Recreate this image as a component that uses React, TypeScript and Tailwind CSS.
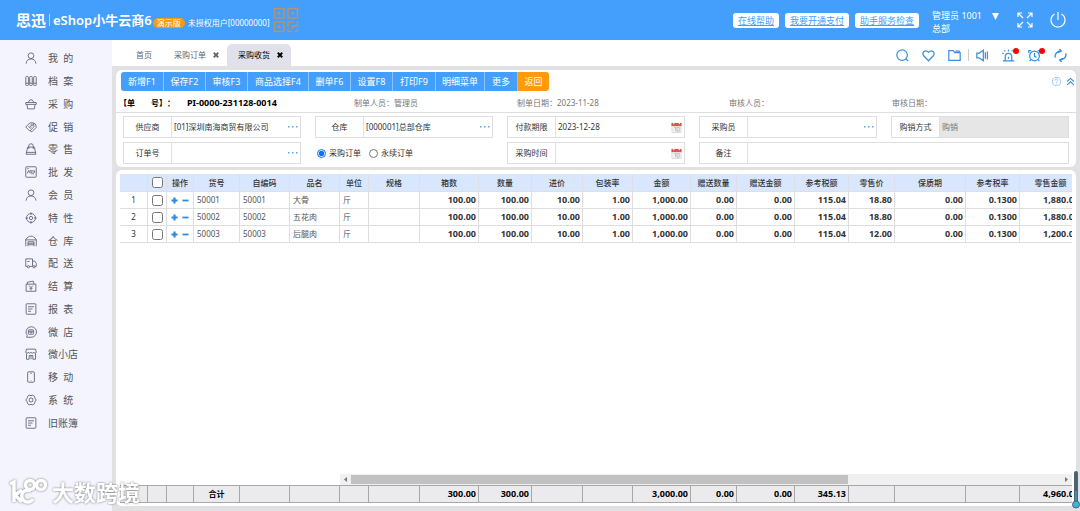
import React, { useState } from "react";

const Svg = ({ children, className = "", sw = 1 }: { children: React.ReactNode; className?: string; sw?: number }) => (
  <svg viewBox="0 0 16 16" fill="none" stroke="currentColor" strokeWidth={sw} className={className} aria-hidden="true">
    {children}
  </svg>
);

const person = (
  <>
    <circle cx="8" cy="5" r="3.8" />
    <path d="M1.500 15.500c.3-4 2.600-6.200 6.500-6.200s6.200 2.200 6.500 6.200" />
  </>
);

const sheet = (
  <>
    <rect x="1.500" y="1" width="13" height="14" rx="1" />
    <path d="M4 5h8M4 8h6M4 11h4" />
  </>
);

const menu = [
  { label: "我  的", icon: person },
  {
    label: "档  案",
    icon: (
      <>
        <rect x="1" y="2" width="3.500" height="12" rx="1" />
        <rect x="6.200" y="2" width="3.500" height="12" rx="1" />
        <rect x="11.500" y="2" width="3.500" height="12" rx="1" />
        <path d="M1 11h3.500M6.200 11h3.500M11.500 11H15" />
      </>
    ),
  },
  {
    label: "采  购",
    icon: <path d="M1 6h14v2.500H1zM2.500 8.500l1 6h9l1-6M4 6l2.500-3.500h3L12 6" />,
  },
  {
    label: "促  销",
    icon: (
      <>
        <path d="M1 8 6.500 2.500h4.500l1 5-5.500 6zM11.500 3l2.500 1 1 4.500-6 6-2-1" />
        <circle cx="9" cy="5.500" r="1" />
        <path d="m4.500 7.500 3 2.500M6 6.500l2.500 2" />
      </>
    ),
  },
  {
    label: "零  售",
    icon: <path d="M3.500 5.500h9l2 9.500h-13zM1.500 12.500h13M5 8V4a3 3 0 0 1 6 0v4" />,
  },
  {
    label: "批  发",
    icon: (
      <>
        <rect x="1" y="1" width="14" height="14" rx="1" />
        <path d="M3 10l2-4 2 4M6.500 6h1l1 3.500h3.500l1-3H8M9 11.500h.5M11.500 11.500h.5M3 3.500h2" />
      </>
    ),
  },
  { label: "会  员", icon: person },
  {
    label: "特  性",
    icon: (
      <>
        <circle cx="8" cy="8" r="6" />
        <circle cx="8" cy="8" r="2.200" />
        <path d="M8 .500v3.500M8 12v3.500M.500 8H4M12 8h3.500" />
      </>
    ),
  },
  {
    label: "仓  库",
    icon: <path d="M1 15V6c2-3 4.500-4.500 7-4.500S13 3 15 6v9M1 6.500h14M4 15V9h8v6M4 11h8M4 13h8" />,
  },
  {
    label: "配  送",
    icon: (
      <>
        <path d="M3 12.500H1v-10h9v10H6M10 5.500h3l2 3v4h-1.500M3 6h3" />
        <circle cx="4.500" cy="13" r="1.500" />
        <circle cx="12" cy="13" r="1.500" />
      </>
    ),
  },
  {
    label: "结  算",
    icon: <path d="M1.500 5.500h13v9.500h-13zM3 5.500V3l8-1.500 1 4M5.500 7.500 8 10l2.500-2.500M8 10v4M6 11h4" />,
  },
  { label: "报  表", icon: sheet },
  {
    label: "微  店",
    icon: (
      <>
        <path d="M2 15l1-2.500A7 7 0 1 1 8 15z" />
        <rect x="4.500" y="5" width="7" height="6" rx="1" />
        <path d="M4.500 7h7M6 9h4" strokeWidth="1.500" />
      </>
    ),
  },
  {
    label: "微小店",
    icon: <path d="M2 1.500h12l1 4c0 2-3 2-3.500 0-.500 2-3 2-3.500 0-.500 2-3 2-3.500 0C4 7.500 1 7.500 1 5.500zM2 7.500V15h3.500v-5h5v5H14V7.500M8 10v5" />,
  },
  {
    label: "移  动",
    icon: (
      <>
        <rect x="3.500" y="1" width="9" height="14" rx="1.500" />
        <path d="M7 3h2M7.500 13h1" />
      </>
    ),
  },
  {
    label: "系  统",
    icon: (
      <>
        <path d="m5.500 1.500 2.500.700 2.500-.700 2 1.500.700 2.500L15 8l-1.800 2.500-.700 2.500-2 1.500-2.500-.700-2.500.700-2-1.500-.700-2.500L1 8l1.800-2.500L3.500 3z" />
        <circle cx="8" cy="8" r="2.700" />
      </>
    ),
  },
  { label: "旧账簿", icon: sheet },
];

const actions = [
  { label: "新增F1", width: "w-[43px]" },
  { label: "保存F2", width: "w-[42px]" },
  { label: "审核F3", width: "w-[42px]" },
  { label: "商品选择F4", width: "w-[61px]" },
  { label: "删单F6", width: "w-[42px]" },
  { label: "设置F8", width: "w-[42px]" },
  { label: "打印F9", width: "w-[43px]" },
  { label: "明细菜单", width: "w-[49px]" },
  { label: "更多", width: "w-[33px]" },
];

const columns = [
  { title: "货号", w: 46, total: "合计" },
  { title: "自编码", w: 50, total: "" },
  { title: "品名", w: 50, total: "" },
  { title: "单位", w: 29, total: "" },
  { title: "规格", w: 51, total: "" },
  { title: "箱数", w: 59, total: "300.00" },
  { title: "数量", w: 53, total: "300.00" },
  { title: "进价", w: 51, total: "" },
  { title: "包装率", w: 50, total: "" },
  { title: "金额", w: 58, total: "3,000.00" },
  { title: "赠送数量", w: 46, total: "0.00" },
  { title: "赠送金额", w: 58, total: "0.00" },
  { title: "参考税额", w: 54, total: "345.13" },
  { title: "零售价", w: 46, total: "" },
  { title: "保质期", w: 71, total: "" },
  { title: "参考税率", w: 54, total: "" },
  { title: "零售金额", w: 62, total: "4,960.00" },
];

const rows = [
  ["50001", "50001", "大骨", "斤", "", "100.00", "100.00", "10.00", "1.00", "1,000.00", "0.00", "0.00", "115.04", "18.80", "0.00", "0.1300", "1,880.00"],
  ["50002", "50002", "五花肉", "斤", "", "100.00", "100.00", "10.00", "1.00", "1,000.00", "0.00", "0.00", "115.04", "18.80", "0.00", "0.1300", "1,880.00"],
  ["50003", "50003", "后腿肉", "斤", "", "100.00", "100.00", "10.00", "1.00", "1,000.00", "0.00", "0.00", "115.04", "12.00", "0.00", "0.1300", "1,200.00"],
];

const Cols = () => (
  <colgroup>
    {[28, 19, 27, ...columns.map((c) => c.w)].map((w, i) => (
      <col key={i} style={{ width: w }} />
    ))}
  </colgroup>
);

const Calendar = () => (
  <svg viewBox="0 0 12 12" className="h-[11px] w-[11px]" aria-hidden="true">
    <rect x="1" y="3" width="10" height="8.500" fill="#f1f1f1" stroke="#c9c9c9" strokeWidth=".6" />
    <path d="M.500 1h11v3.500H.500z" fill="#d9534f" />
    <path d="M3 0v2.500M9 0v2.500" stroke="#fff" strokeWidth="1.200" />
    <path d="M3.500 6h2M6.500 6h2.500M5 6v4M6.500 6v4h2.500V6" stroke="#aaa" strokeWidth=".7" fill="none" />
  </svg>
);

type FieldProps = {
  id: string;
  label: string;
  value?: string;
  kind?: "pick" | "date" | "plain";
  disabled?: boolean;
  className?: string;
};

const Field = ({ id, label, value = "", kind = "plain", disabled, className = "" }: FieldProps) => (
  <div className={`flex h-[22px] border border-[#dedede] ${className}`}>
    <label htmlFor={id} className="flex w-12 shrink-0 items-center justify-center border-r border-[#e2e2e2]">
      {label}
    </label>
    <input
      id={id}
      defaultValue={value}
      disabled={disabled}
      className="min-w-0 flex-1 px-[2px] outline-none disabled:bg-[#e6e6e6] disabled:text-[#777]"
    />
    {kind === "pick" && (
      <button aria-label={`选择${label}`} className="flex w-[14px] items-center justify-center text-[#5aa9e6]">
        <svg viewBox="0 0 10 2" className="h-[2px] w-[10px]" fill="currentColor">
          <path d="M0 0h1.500v1.500H0zM4 0h1.500v1.500H4zM8 0h1.500v1.500H8z" />
        </svg>
      </button>
    )}
    {kind === "date" && (
      <button aria-label={`选择${label}`} className="flex w-4 items-center justify-center">
        <Calendar />
      </button>
    )}
  </div>
);

const Close = () => (
  <svg viewBox="0 0 8 8" className="h-[6px] w-[6px]" stroke="currentColor" strokeWidth="2.400" aria-hidden="true">
    <path d="m1 1 6 6M7 1 1 7" />
  </svg>
);

const QrMark = () => (
  <svg viewBox="0 0 26 26" className="ml-[3px] h-[26px] w-[26px]" fill="none" stroke="#b5946f" strokeWidth="1.500" aria-hidden="true">
    <path d="M1.500 1.500h9.500v9.500H1.500zM15 1.500h9.500v9.500H15zM1.500 15h9.500v9.500H1.500z" />
    <path d="M5 5h2.500v2.500H5zM18.500 5H21v2.500h-2.500zM5 18.500h2.500V21H5z" fill="#b5946f" stroke="none" />
    <path d="M15 20v-5h6M24.500 14v5h-5v3M15 22v2.500h4M22 24.500h2.500V22" />
  </svg>
);

const Header = () => (
  <header className="flex h-10 shrink-0 items-center bg-[#449efc] pr-[14px] pl-4 text-white">
    <div className="text-[15px] leading-5 font-bold">思迅</div>
    <div className="mx-[3px] h-3 w-px bg-white/60" />
    <h1 className="text-[13px] leading-5 font-semibold whitespace-nowrap">eShop小牛云商6</h1>
    <span className="mt-[6px] ml-px rounded-full bg-[#f59a13] px-1 text-[8px] leading-[10px]">演示版</span>
    <span className="mt-[6px] ml-[3px] text-[8px] leading-[10px] whitespace-nowrap">未授权用户[00000000]</span>
    <QrMark />
    <nav className="ml-auto flex gap-[6px]">
      {["在线帮助", "我要开通支付", "助手服务检查"].map((t) => (
        <a key={t} href="#" className="rounded-[3px] bg-white px-[5px] text-[9px] leading-[15px] whitespace-nowrap text-[#449efc] underline">
          {t}
        </a>
      ))}
    </nav>
    <div className="mt-1 ml-[13px] text-[9px] leading-[13px] whitespace-nowrap">
      <p>管理员 1001</p>
      <p>总部</p>
    </div>
    <button aria-label="切换用户" className="mb-2 ml-[10px]">
      <svg viewBox="0 0 8 8" className="h-[7px] w-[7px]" fill="currentColor">
        <path d="M0 0h8L4 8z" />
      </svg>
    </button>
    <button aria-label="全屏" className="ml-[18px]">
      <Svg className="h-4 w-4" sw={1.2}>
        <path d="M1 5V1h4M1 1l5 5M11 1h4v4M15 1l-5 5M1 11v4h4M1 15l5-5M15 11v4h-4M15 15l-5-5" />
      </Svg>
    </button>
    <button aria-label="退出" className="ml-[17px]">
      <Svg className="h-4 w-4" sw={1.2}>
        <path d="M8 0v8M4.500 2A7 7 0 1 0 11.500 2" />
      </Svg>
    </button>
  </header>
);

const TabBar = () => (
  <div className="flex h-[26px] shrink-0 items-end bg-white pr-[13px] pl-6 text-[8px] text-[#666]">
    <button className="h-[22px]">首页</button>
    <button className="ml-[22px] flex h-[22px] items-center gap-[7px]">
      采购订单 <Close />
    </button>
    <button className="ml-2 flex h-[22px] items-center gap-[7px] rounded-t-[5px] bg-[#e0e1ea] pr-2 pl-[11px] text-black">
      采购收货 <Close />
    </button>
    <div className="ml-auto flex h-[22px] items-center gap-[13px] text-[#3a8fdc]">
      <button aria-label="搜索">
        <Svg className="h-[13px] w-[13px]" sw={1.5}>
          <circle cx="7.500" cy="7.500" r="6.500" />
          <path d="m12 12 3 3" />
        </Svg>
      </button>
      <button aria-label="收藏">
        <Svg className="h-[13px] w-[13px]" sw={1.5}>
          <path d="M8 14.500 1.800 8C-.500 4.500 4 0 8 4c4-4 8.500.500 6.200 4z" />
        </Svg>
      </button>
      <button aria-label="文件夹">
        <Svg className="h-[13px] w-[13px]" sw={1.5}>
          <path d="M1 2h5.500l2 2.500H15V14H1zM9 2.500h4.500l1 2" />
        </Svg>
      </button>
      <div className="-mx-[6px] h-3 w-px bg-[#ccc]" />
      <button aria-label="公告">
        <Svg className="h-[13px] w-[13px]" sw={1.5}>
          <path d="M1 5h3l5-3.500v13L4 11H1zM11.500 4v8M14 3v10" />
        </Svg>
      </button>
      <button aria-label="预警" className="relative">
        <Svg className="h-[13px] w-[13px]" sw={1.5}>
          <path d="M4 14V9.500a4 4 0 0 1 8 0V14M1 14.500h14M8 9.500V12M8 3V1M4 3 3 1.500M12 3l1-1.500M2 6 .500 5" />
        </Svg>
        <span className="absolute -top-px -right-1 h-[6px] w-[6px] rounded-full bg-[#f00]" />
      </button>
      <button aria-label="提醒" className="relative">
        <Svg className="h-[13px] w-[13px]" sw={1.5}>
          <circle cx="8" cy="8.500" r="6" />
          <path d="M8 5v4l2.500 1.500M1 5V2h3M15 5V2h-3M3.500 13 2 15M12.500 13l1.500 2" />
        </Svg>
        <span className="absolute -top-px -right-1 h-[6px] w-[6px] rounded-full bg-[#f00]" />
      </button>
      <button aria-label="刷新">
        <Svg className="h-[13px] w-[13px]" sw={1.7}>
          <path d="M1.500 10.500C.500 6 4 2.500 9 2.500M5 4.500l4-2L6.500 0M14.500 5.500c1 4.500-2.500 8-7.500 8M11 11.500l-4 2L9.500 16" />
        </Svg>
      </button>
    </div>
  </div>
);

const OrderForm = () => {
  const [orderType, setOrderType] = useState("purchase");

  return (
    <section className="shrink-0 rounded-[6px] bg-white pb-[3px] text-[8px] text-[#333]">
      <div className="flex items-center px-[5px] pt-[2px]">
        <div className="flex h-[19px] overflow-hidden rounded-[3px] text-[9px] text-white">
          {actions.map((a) => (
            <button key={a.label} className={`border-r border-[#8cc4ff] bg-[#449efc] whitespace-nowrap ${a.width}`}>
              {a.label}
            </button>
          ))}
          <button className="w-[31px] bg-[#ff9a0a]">返回</button>
        </div>
        <div className="mr-[-4px] ml-auto flex items-center gap-[5px] text-[#3a8fdc]">
          <button aria-label="帮助">
            <Svg className="h-[9px] w-[9px] opacity-70" sw={1.2}>
              <circle cx="8" cy="8" r="7.300" />
              <path d="M5.500 6.200a2.500 2.500 0 1 1 3.500 2c-1 .500-1 1-1 1.800M8 11.500V13" />
            </Svg>
          </button>
          <button aria-label="收起">
            <Svg className="h-[9px] w-[9px]" sw={2}>
              <path d="m2 8 6-5.500L14 8M2 14l6-5.500L14 14" />
            </Svg>
          </button>
        </div>
      </div>
      <div className="grid h-[22px] grid-cols-[238fr_163fr_212fr_163fr_184fr] items-center border-b border-[#dedede] pt-[2px] text-[#777]">
        <p className="flex items-center pl-[3px] font-bold text-black">
          <span>【单</span>
          <span className="ml-4">号】</span>
          <span>：</span>
          <span className="ml-3 text-[9px]">PI-0000-231128-0014</span>
        </p>
        <p>制单人员：管理员</p>
        <p>制单日期：2023-11-28</p>
        <p>审核人员：</p>
        <p>审核日期：</p>
      </div>
      <div className="grid grid-cols-5 gap-x-[14px] gap-y-1 px-[7px] pt-[3px]">
        <Field id="supplier" label="供应商" value="[01]深圳南海商贸有限公司" kind="pick" />
        <Field id="warehouse" label="仓库" value="[000001]总部仓库" kind="pick" />
        <Field id="payDate" label="付款期限" value="2023-12-28" kind="date" />
        <Field id="buyer" label="采购员" kind="pick" />
        <Field id="saleMode" label="购销方式" value="购销" disabled />
        <Field id="orderNo" label="订单号" kind="pick" />
        <div className="flex items-center gap-2 pl-[2px]">
          <label className="flex items-center gap-[3px]">
            <input
              type="radio"
              name="orderType"
              className="h-[9px] w-[9px]"
              checked={orderType === "purchase"}
              onChange={() => setOrderType("purchase")}
            />
            采购订单
          </label>
          <label className="flex items-center gap-[3px]">
            <input
              type="radio"
              name="orderType"
              className="h-[9px] w-[9px]"
              checked={orderType === "standing"}
              onChange={() => setOrderType("standing")}
            />
            永续订单
          </label>
        </div>
        <Field id="buyTime" label="采购时间" kind="date" />
        <Field id="remark" label="备注" className="col-span-2" />
      </div>
    </section>
  );
};

const ItemTable = () => (
  <section className="flex min-h-0 flex-1 flex-col rounded-[6px] bg-white px-1 pt-1 pb-[3px] text-[8px] text-[#333]">
    <div className="min-h-0 flex-1 overflow-hidden">
      <table className="w-[962px] table-fixed border-separate border-spacing-0">
        <Cols />
        <thead>
          <tr className="h-[18px] bg-[#d8e7fe] [&>th]:border-r [&>th]:border-b [&>th]:border-[#dcdfe6] [&>th]:p-0 [&>th]:font-medium">
            <th></th>
            <th>
              <input type="checkbox" aria-label="全选" className="mx-auto block h-[11px] w-[11px]" />
            </th>
            <th>操作</th>
            {columns.map((c) => (
              <th key={c.title} className="whitespace-nowrap">{c.title}</th>
            ))}
          </tr>
        </thead>
        <tbody>
          {rows.map((row, r) => (
            <tr key={r} className="h-[17px] leading-3 [&>td]:border-r [&>td]:border-b [&>td]:border-[#dedede] [&>td]:py-0">
              <td className="text-center">{r + 1}</td>
              <td>
                <input type="checkbox" aria-label={`选择第${r + 1}行`} className="mx-auto block h-[11px] w-[11px]" />
              </td>
              <td>
                <div className="flex justify-center gap-1 text-[#2b8bdc]">
                  <button aria-label="增加行">
                    <Svg className="h-[7px] w-[7px]" sw={5}>
                      <path d="M8 1v14M1 8h14" />
                    </Svg>
                  </button>
                  <button aria-label="删除行">
                    <Svg className="h-[7px] w-[7px]" sw={4}>
                      <path d="M1 8h14" />
                    </Svg>
                  </button>
                </div>
              </td>
              {row.map((v, i) => (
                <td
                  key={i}
                  className={i < 5 ? "px-[3px] whitespace-nowrap text-[#555]" : "px-[2px] text-right text-[9px] font-bold"}
                >
                  {v}
                </td>
              ))}
            </tr>
          ))}
        </tbody>
      </table>
    </div>
    <div className="ml-[220px] flex h-[11px] shrink-0 items-center bg-[#f0f0f0] text-[#777]">
      <svg viewBox="0 0 11 11" className="h-[11px] w-[11px]" fill="currentColor">
        <path d="M7 3v5L4 5.500z" />
      </svg>
      <div className="flex-1">
        <div className="h-[9px] w-[70%] bg-[#c1c1c1]" />
      </div>
      <svg viewBox="0 0 11 11" className="h-[11px] w-[11px]" fill="currentColor">
        <path d="M4 3v5l3-2.500z" />
      </svg>
    </div>
    <div className="shrink-0 overflow-hidden">
      <table className="w-[962px] table-fixed border-separate border-spacing-0 border-t border-[#a8a8a8]">
        <Cols />
        <tbody>
          <tr className="h-[17px] bg-[#ebebed] leading-3 font-bold text-black [&>td]:border-r [&>td]:border-b [&>td]:border-[#a8a8a8] [&>td]:px-[2px] [&>td]:py-0">
            <td></td>
            <td></td>
            <td></td>
            {columns.map((c, i) => (
              <td key={c.title} className={i === 0 ? "text-center" : "text-right text-[9px]"}>{c.total}</td>
            ))}
          </tr>
        </tbody>
      </table>
    </div>
  </section>
);

const App = () => {
  return (
    <div className="relative flex h-screen flex-col overflow-hidden bg-[#e1e1e4] font-['Noto_Sans','Noto_Sans_CJK_SC',sans-serif]">
      <Header />
      <div className="flex min-h-0 flex-1">
        <aside className="w-28 shrink-0 bg-[#f4f4ff] pt-[7px]">
          <nav className="flex h-[387px] flex-col">
            {menu.map((m) => (
              <a key={m.label} href="#" className="flex flex-1 items-center gap-[11px] pl-[25px] text-[10px] leading-4 whitespace-pre text-[#555]">
                <Svg className="h-3 w-3 text-[#62667c]" sw={1.2}>{m.icon}</Svg>
                {m.label}
              </a>
            ))}
          </nav>
        </aside>
        <main className="flex min-w-0 flex-1 flex-col">
          <TabBar />
          <div className="flex min-h-0 flex-1 flex-col gap-[3px] px-1 pt-1 pb-[5px]">
            <OrderForm />
            <ItemTable />
          </div>
        </main>
      </div>

      {/* watermark */}
      <div className="pointer-events-none absolute bottom-[5px] left-2 flex items-center gap-1 text-white drop-shadow-[0_0_1px_#777]">
        <svg viewBox="0 0 40 28" className="h-7 w-10" fill="none" stroke="currentColor" strokeWidth="3.500" aria-hidden="true">
          <path d="M2 6l4-2v20M14 12l-7 5 7 7M25 21a6 6 0 1 1-2-8" />
          <circle cx="22" cy="7" r="4.500" />
          <circle cx="33" cy="7" r="4.500" />
        </svg>
        <span className="text-[22px] leading-7 font-bold">大数跨境</span>
      </div>

      <svg viewBox="0 0 8 40" className="absolute right-0 bottom-0 h-10 w-2" aria-hidden="true">
        <path d="M4 2v30" stroke="#4c6470" strokeWidth="4" strokeLinecap="round" />
        <path d="M4 20v12" stroke="#3f8fae" strokeWidth="2" />
        <circle cx="4" cy="33.500" r="3.500" fill="#3db2dc" stroke="#4c6470" />
      </svg>
    </div>
  );
};

export default App;
